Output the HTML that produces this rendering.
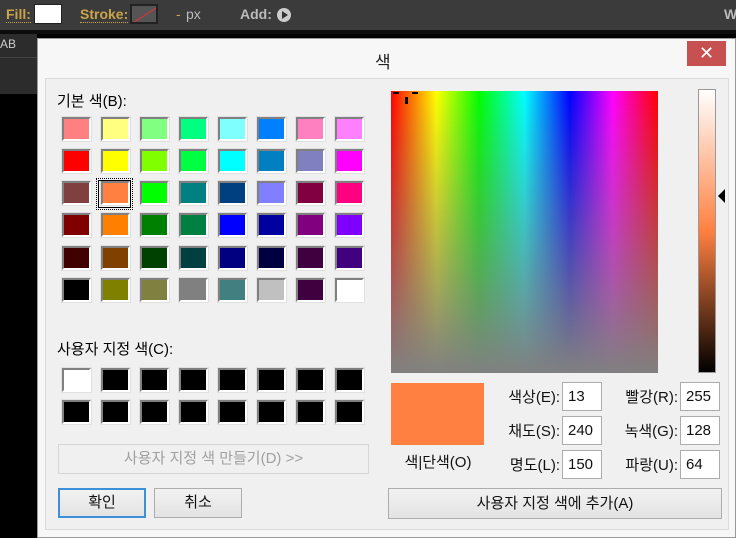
<!DOCTYPE html>
<html><head><meta charset="utf-8"><style>
*{margin:0;padding:0;box-sizing:border-box}
body{width:736px;height:538px;overflow:hidden;background:#000;font-family:"Liberation Sans","Noto Sans CJK KR",sans-serif;position:relative;font-size:15px;color:#000}
.a{position:absolute}
.sw{position:absolute;width:29px;height:24px;border:2px solid;border-color:#808080 #fff #fff #808080;box-shadow:0 0 0 1px #e0e0e0}
.inp{position:absolute;background:#fff;border:1px solid #acacac;width:40px;height:29px;padding:5px 0 0 5px;font-size:15px;color:#111}
.lbl{position:absolute;width:80px;text-align:right;font-size:15px;color:#111}
.btn{position:absolute;border:1px solid #adadad;background:linear-gradient(#f2f2f2,#e3e3e3);text-align:center;font-size:15px;color:#111}
</style></head><body>
<div class="a" style="left:0;top:0;width:736px;height:30px;background:#3b3b3b"></div>
<div class="a" style="left:0;top:30px;width:736px;height:4px;background:#0c0c0c"></div>
<div class="a" style="left:0;top:34px;width:37px;height:60px;background:#2c2c2c"></div>
<div class="a" style="left:0;top:57px;width:37px;height:1px;background:#444"></div>
<div class="a" style="left:0;top:37px;color:#ccc;font-size:12px">AB</div>
<div class="a" style="left:6px;top:6px;color:#c9a44a;font-size:14px;font-weight:bold;border-bottom:1px dotted #c9a44a">Fill:</div>
<div class="a" style="left:34px;top:4px;width:28px;height:20px;background:#fff;border:1px solid #222"></div>
<div class="a" style="left:80px;top:6px;color:#c9a44a;font-size:14px;font-weight:bold;border-bottom:1px dotted #c9a44a">Stroke:</div>
<div class="a" style="left:130px;top:4px;width:28px;height:20px;background:#555;border:2px solid #222;overflow:hidden"><div style="position:absolute;left:-4px;top:8px;width:36px;height:1px;background:#d33;transform:rotate(-33deg)"></div></div>
<div class="a" style="left:176px;top:6px;color:#c9a44a;font-size:14px">-</div>
<div class="a" style="left:186px;top:6px;color:#bbb;font-size:14px">px</div>
<div class="a" style="left:240px;top:6px;color:#bbb;font-size:14px;font-weight:bold">Add:</div>
<div class="a" style="left:277px;top:8px;width:14px;height:14px;border-radius:50%;background:#ccc"><div style="position:absolute;left:5px;top:3px;border-left:6px solid #333;border-top:4px solid transparent;border-bottom:4px solid transparent"></div></div>
<div class="a" style="left:724px;top:6px;color:#bbb;font-size:14px;font-weight:bold">W</div>

<div class="a" style="left:37px;top:38px;width:699px;height:500px;background:#f7f7f7;border:1px solid #999"></div>
<div class="a" style="left:375px;top:48px;font-size:17px;color:#222">색</div>
<div class="a" style="left:687px;top:41px;width:39px;height:25px;background:#c75050;color:#fff;text-align:center;font-size:18px;line-height:24px">✕</div>
<div class="a" style="left:45px;top:78px;width:684px;height:452px;background:#f0f0f0;border:1px solid #dadada"></div>

<div class="a" style="left:57px;top:90px">기본 색(B):</div>
<div class="a" style="left:57px;top:338px">사용자 지정 색(C):</div>
<div id="g"></div>
<div class="a" style="left:96px;top:178px;width:37px;height:32px;border:1px dotted #000"></div>
<div class="a" style="left:98px;top:180px;width:33px;height:28px;border:1px solid #000"></div>

<div class="btn" style="left:58px;top:444px;width:311px;height:30px;line-height:28px;color:#a0a0a0;background:#f0f0f0;border-color:#d6d6d6">사용자 지정 색 만들기(D) &gt;&gt;</div>
<div class="btn" style="left:58px;top:488px;width:88px;height:30px;line-height:26px;border:2px solid #3c8fd8">확인</div>
<div class="btn" style="left:154px;top:488px;width:88px;height:30px;line-height:28px">취소</div>

<div class="a" style="left:391px;top:91px;width:267px;height:282px;background:linear-gradient(to bottom,rgba(128,128,128,0),#808080),linear-gradient(to right,#f00,#ff0 17%,#0f0 33%,#0ff 50%,#00f 67%,#f0f 83%,#f00)"></div>
<div class="a" style="left:393px;top:92px;width:6px;height:2px;background:#000"></div>
<div class="a" style="left:412px;top:92px;width:6px;height:2px;background:#000"></div>
<div class="a" style="left:405px;top:97px;width:3px;height:7px;background:#000"></div>
<div class="a" style="left:698px;top:89px;width:18px;height:284px;border:1px solid #999;background:linear-gradient(#fff,#ff8040 50%,#000)"></div>
<div class="a" style="left:718px;top:189px;border-right:7px solid #000;border-top:7px solid transparent;border-bottom:7px solid transparent"></div>

<div class="a" style="left:391px;top:383px;width:93px;height:62px;background:#ff8040"></div>
<div class="a" style="left:393px;top:451px;width:90px;text-align:center;color:#111">색|단색(O)</div>

<div class="lbl" style="left:480px;top:386px">색상(E):</div>
<div class="lbl" style="left:480px;top:420px">채도(S):</div>
<div class="lbl" style="left:480px;top:454px">명도(L):</div>
<div class="inp" style="left:562px;top:382px">13</div>
<div class="inp" style="left:562px;top:416px">240</div>
<div class="inp" style="left:562px;top:450px">150</div>
<div class="lbl" style="left:598px;top:386px">빨강(R):</div>
<div class="lbl" style="left:598px;top:420px">녹색(G):</div>
<div class="lbl" style="left:598px;top:454px">파랑(U):</div>
<div class="inp" style="left:680px;top:382px">255</div>
<div class="inp" style="left:680px;top:416px">128</div>
<div class="inp" style="left:680px;top:450px">64</div>
<div class="btn" style="left:388px;top:488px;width:334px;height:31px;line-height:29px">사용자 지정 색에 추가(A)</div>

<script>
var c=["#ff8080","#ffff80","#80ff80","#00ff80","#80ffff","#0080ff","#ff80c0","#ff80ff",
"#ff0000","#ffff00","#80ff00","#00ff40","#00ffff","#0080c0","#8080c0","#ff00ff",
"#804040","#ff8040","#00ff00","#008080","#004080","#8080ff","#800040","#ff0080",
"#800000","#ff8000","#008000","#008040","#0000ff","#0000a0","#800080","#8000ff",
"#400000","#804000","#004000","#004040","#000080","#000040","#400040","#400080",
"#000000","#808000","#808040","#808080","#408080","#c0c0c0","#400040","#ffffff"];
var h="",ys=[117,149,181,213,246,278];
for(var i=0;i<48;i++){h+='<div class="sw" style="left:'+(62+39*(i%8))+'px;top:'+ys[Math.floor(i/8)]+'px;background:'+c[i]+'"></div>';}
for(var i=0;i<16;i++){h+='<div class="sw" style="left:'+(62+39*(i%8))+'px;top:'+(i<8?368:400)+'px;background:'+(i==0?'#fff':'#000')+'"></div>';}
document.getElementById('g').innerHTML=h;
</script>
</body></html>
